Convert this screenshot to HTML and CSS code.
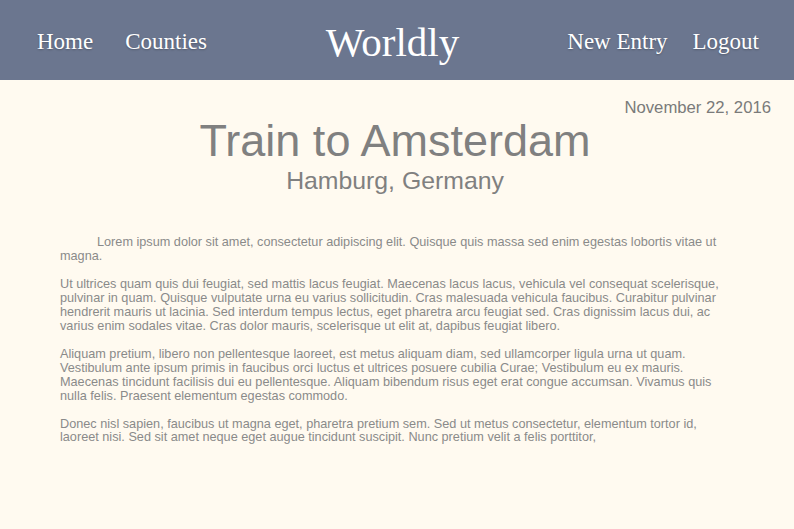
FILE: index.html
```html
<!DOCTYPE html>
<html>
<head>
<meta charset="utf-8">
<title>Worldly</title>
<link rel="stylesheet" href="styles.css">
</head>
<body>
<header class="topbar">
  <nav class="nav nav-left">
    <a href="#" class="nav-link">Home</a>
    <a href="#" class="nav-link">Counties</a>
  </nav>
  <div class="brand">Worldly</div>
  <nav class="nav nav-right">
    <a href="#" class="nav-link">New Entry</a>
    <a href="#" class="nav-link">Logout</a>
  </nav>
</header>
<main class="entry">
  <div class="entry-date">November 22, 2016</div>
  <h1 class="entry-title">Train to Amsterdam</h1>
  <h2 class="entry-place">Hamburg, Germany</h2>
  <div class="entry-body">
    <p class="first">Lorem ipsum dolor sit amet, consectetur adipiscing elit. Quisque quis massa sed enim egestas lobortis vitae ut magna.</p>
    <p>Ut ultrices quam quis dui feugiat, sed mattis lacus feugiat. Maecenas lacus lacus, vehicula vel consequat scelerisque, pulvinar in quam. Quisque vulputate urna eu varius sollicitudin. Cras malesuada vehicula faucibus. Curabitur pulvinar hendrerit mauris ut lacinia. Sed interdum tempus lectus, eget pharetra arcu feugiat sed. Cras dignissim lacus dui, ac varius enim sodales vitae. Cras dolor mauris, scelerisque ut elit at, dapibus feugiat libero.</p>
    <p>Aliquam pretium, libero non pellentesque laoreet, est metus aliquam diam, sed ullamcorper ligula urna ut quam. Vestibulum ante ipsum primis in faucibus orci luctus et ultrices posuere cubilia Curae; Vestibulum eu ex mauris. Maecenas tincidunt facilisis dui eu pellentesque. Aliquam bibendum risus eget erat congue accumsan. Vivamus quis nulla felis. Praesent elementum egestas commodo.</p>
    <p>Donec nisl sapien, faucibus ut magna eget, pharetra pretium sem. Sed ut metus consectetur, elementum tortor id, laoreet nisi. Sed sit amet neque eget augue tincidunt suscipit. Nunc pretium velit a felis porttitor,</p>
  </div>
</main>
</body>
</html>
```
FILE: styles.css
```css
html, body {
  margin: 0;
  padding: 0;
  background: #fffaf0;
}
body {
  font-family: "Liberation Sans", Arial, sans-serif;
  min-height: 529px;
}
.topbar {
  height: 80px;
  background: #6b768f;
  display: grid;
  grid-template-columns: 1fr auto 1fr;
  align-items: center;
  padding: 0 35px 0 37px;
  box-sizing: border-box;
}
.nav {
  display: flex;
  align-items: center;
  gap: 32px;
  padding-top: 3px;
}
.nav-right {
  justify-content: flex-end;
  gap: 25px;
}
.nav-link {
  font-family: "Liberation Serif", "Times New Roman", serif;
  font-size: 23px;
  color: #ffffff;
  text-decoration: none;
  text-shadow: 0 1px 2px rgba(0, 0, 0, 0.25);
}
.brand {
  font-family: "Liberation Serif", "Times New Roman", serif;
  font-size: 41px;
  color: #ffffff;
  margin-right: 11px;
  padding-top: 3px;
}
.entry {
  padding: 18px 23px 0 19px;
  color: #808080;
}
.entry-date {
  text-align: right;
  font-size: 16.7px;
  color: #7a7a7a;
  line-height: 20px;
}
.entry-title {
  margin: 0;
  text-align: center;
  font-weight: normal;
  font-size: 45px;
  line-height: 46px;
  color: #808080;
}
.entry-place {
  margin: 3px 0 0 0;
  text-align: center;
  font-weight: normal;
  font-size: 24.8px;
  line-height: 28px;
  color: #808080;
}
.entry-body {
  margin: 41px 0 0 41px;
  width: 674px;
  font-size: 12.7px;
  line-height: 13.95px;
  color: #8a8a8a;
}
.entry-body p {
  margin: 0 0 14px 0;
}
.entry-body p.first {
  text-indent: 37px;
}
```
